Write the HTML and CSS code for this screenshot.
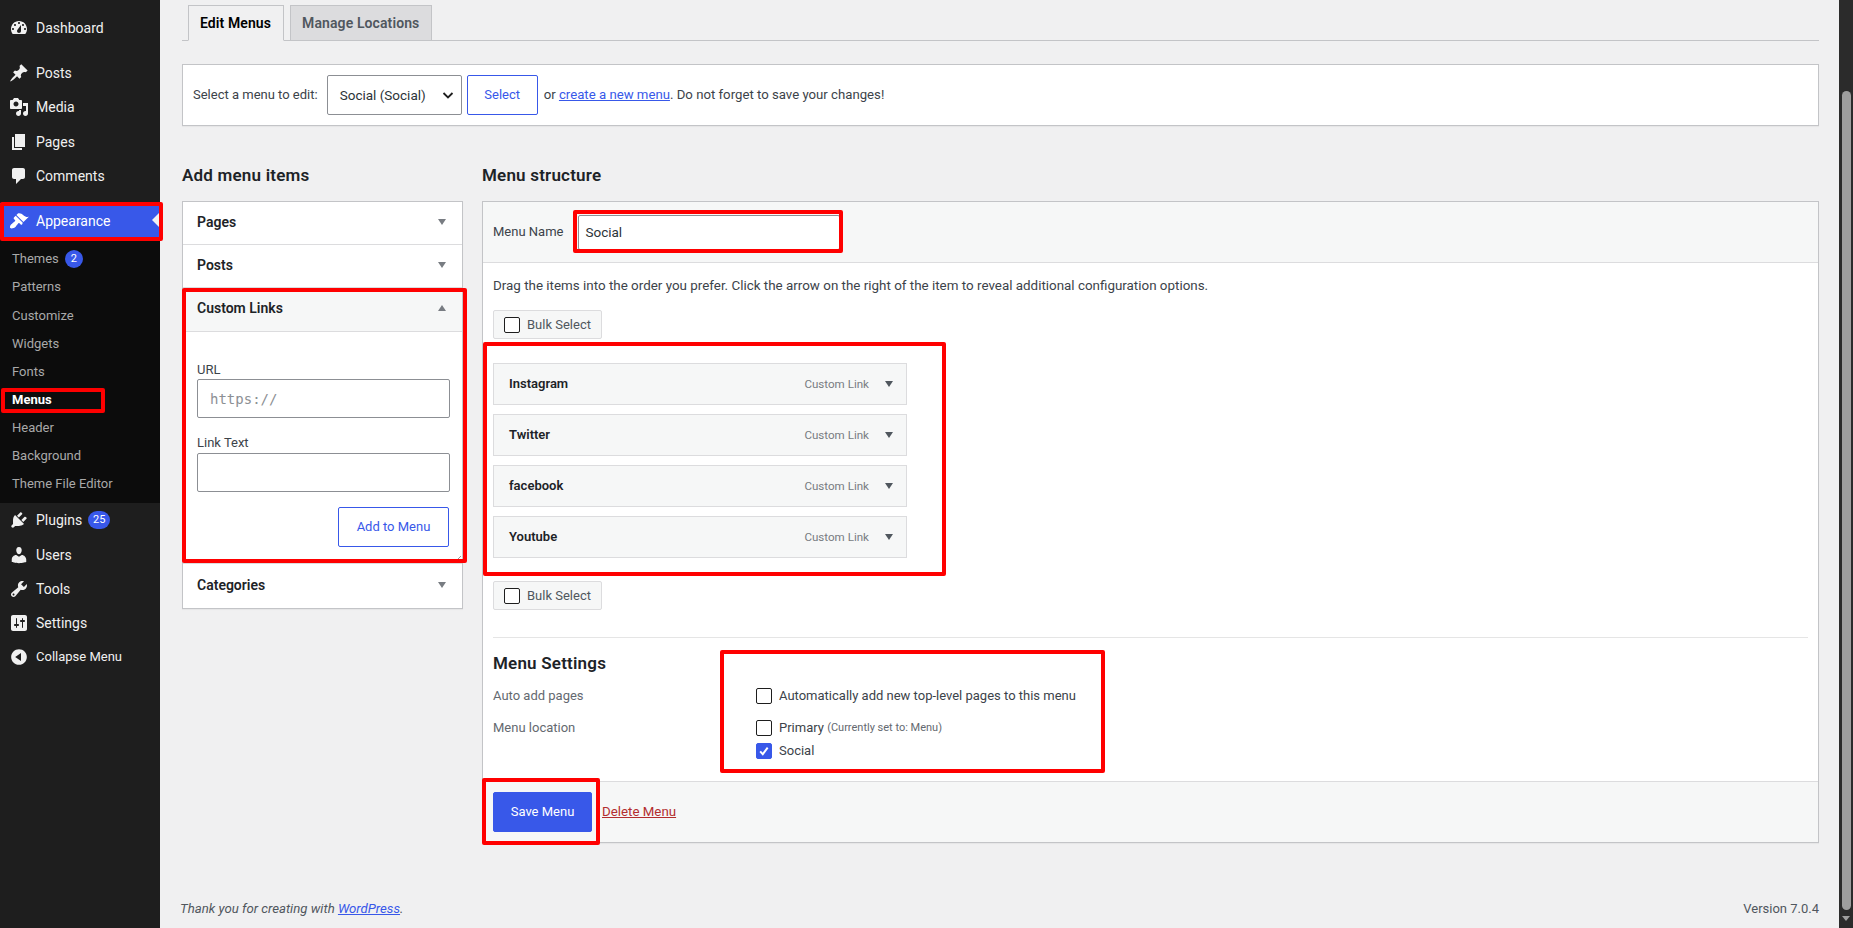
FILE: index.html
```html
<!DOCTYPE html>
<html lang="en">
<head>
  <meta charset="UTF-8">
  <meta name="viewport" content="width=device-width, initial-scale=1.0">
  <title>Menus</title>
  <link rel="stylesheet" href="styles.css">
</head>
<body>
  <div class="page">
    <aside class="sidebar">
      <ul class="menu">
        <li class="menu-item menu-gap"><svg viewBox="0 0 20 20"><path fill-rule="evenodd" d="M3.76 16h12.48c1.1-1.37 1.76-3.11 1.76-5 0-4.42-3.58-8-8-8s-8 3.58-8 8c0 1.89.66 3.63 1.76 5zM10 4c.55 0 1 .45 1 1s-.45 1-1 1-1-.45-1-1 .45-1 1-1zM6 6c.55 0 1 .45 1 1s-.45 1-1 1-1-.45-1-1 .45-1 1-1zm8 0c.55 0 1 .45 1 1s-.45 1-1 1-1-.45-1-1 .45-1 1-1zm-5.37 5.55L12 7v6c0 1.1-.9 2-2 2s-2-.9-2-2c0-.57.24-1.08.63-1.45zM4 10c.55 0 1 .45 1 1s-.45 1-1 1-1-.45-1-1 .45-1 1-1zm12 0c.55 0 1 .45 1 1s-.45 1-1 1-1-.45-1-1 .45-1 1-1z"/></svg>Dashboard</li>
        <li class="menu-item"><svg viewBox="0 0 20 20"><path d="M10.44 3.02l1.82-1.82 6.36 6.35-1.83 1.82c-1.05-.68-2.48-.57-3.41.36l-.75.75c-.92.93-1.04 2.35-.35 3.41l-1.83 1.82-2.41-2.41-2.8 2.79c-.42.42-3.38 2.71-3.8 2.29s1.86-3.39 2.28-3.81l2.79-2.79L4.1 9.36l1.83-1.82c1.05.69 2.48.57 3.4-.36l.75-.75c.93-.92 1.05-2.35.36-3.41z"/></svg>Posts</li>
        <li class="menu-item"><svg viewBox="0 0 20 20"><path fill-rule="evenodd" d="M13 11V4c0-.55-.45-1-1-1h-1.67L9 1H5L3.67 3H2c-.55 0-1 .45-1 1v7c0 .55.45 1 1 1h10c.55 0 1-.45 1-1zM7 4.5c1.38 0 2.5 1.12 2.5 2.5S8.38 9.5 7 9.5 4.5 8.38 4.5 7 5.62 4.5 7 4.5zM14 6h5v10.5c0 1.38-1.12 2.5-2.5 2.5S14 17.88 14 16.5s1.12-2.5 2.5-2.5c.17 0 .34.02.5.05V9h-3V6zm-4 8.05V13h2v3.5c0 1.38-1.12 2.5-2.5 2.5S7 17.88 7 16.5 8.12 14 9.5 14c.17 0 .34.02.5.05z"/></svg>Media</li>
        <li class="menu-item"><svg viewBox="0 0 20 20"><path d="M6 15V2h10v13H6zm-1 1h8v2H3V5h2v11z"/></svg>Pages</li>
        <li class="menu-item menu-gap"><svg viewBox="0 0 20 20"><path d="M5 2h9c1.1 0 2 .9 2 2v7c0 1.1-.9 2-2 2h-2l-5 5v-5H5c-1.1 0-2-.9-2-2V4c0-1.1.9-2 2-2z"/></svg>Comments</li>
        <li class="menu-item current"><svg viewBox="0 0 20 20"><path d="M14.48 11.06L7.41 3.99l1.5-1.5c.5-.56 2.3-.47 3.51.32 1.21.8 1.43 1.28 2.91 2.1 1.18.64 2.45 1.26 4.45.85zm-.71.71L6.7 4.7 4.93 6.47c-.39.39-.39 1.02 0 1.41l1.06 1.06c.39.39.39 1.03 0 1.42-.6.6-1.43 1.11-2.21 1.69-.35.26-.7.53-1.01.84C1.43 13.23.4 16.22 1.4 17c1 .97 3.95-.02 5.29-1.37.31-.31.58-.66.84-1.01.58-.78 1.09-1.61 1.69-2.21.39-.39 1.02-.39 1.41 0l1.06 1.06c.39.39 1.02.39 1.41 0z"/></svg>Appearance<span class="current-arrow"></span></li>
        <li>
          <ul class="submenu">
            <li>Themes <span class="badge">2</span></li>
            <li>Patterns</li>
            <li>Customize</li>
            <li>Widgets</li>
            <li>Fonts</li>
            <li class="active">Menus</li>
            <li>Header</li>
            <li>Background</li>
            <li>Theme File Editor</li>
          </ul>
        </li>
        <li class="menu-item"><svg viewBox="0 0 20 20"><path d="M13.11 4.36L9.87 7.6 8 5.73l3.24-3.24c.35-.34 1.05-.2 1.56.32.52.51.66 1.21.31 1.55zm-8 1.77l.91-1.12 9.01 9.01-1.19.84c-.71.71-2.63 1.16-3.82 1.16H6.14L4.9 17.26c-.59.59-1.54.59-2.12 0-.59-.58-.59-1.53 0-2.12l1.24-1.24v-3.88c0-1.13.4-3.19 1.09-3.89zm7.26 3.97l3.24-3.24c.34-.35 1.04-.21 1.55.31.52.51.66 1.21.31 1.55l-3.24 3.25z"/></svg>Plugins <span class="badge badge-wide">25</span></li>
        <li class="menu-item"><svg viewBox="0 0 20 20"><path d="M10 9.25c-2.27 0-2.73-3.44-2.73-3.44C7 4.02 7.82 2 9.97 2c2.16 0 2.98 2.02 2.71 3.81 0 0-.41 3.44-2.68 3.44zm0 2.57L12.72 10c2.39 0 4.52 2.33 4.52 4.53v2.49s-3.65 1.13-7.24 1.13c-3.65 0-7.24-1.13-7.24-1.13v-2.49c0-2.25 1.94-4.48 4.47-4.48z"/></svg>Users</li>
        <li class="menu-item"><svg viewBox="0 0 20 20"><path fill-rule="evenodd" d="M16.68 9.77c-1.34 1.34-3.3 1.67-4.95.99l-5.41 6.52c-.99.99-2.59.99-3.58 0s-.99-2.59 0-3.57l6.52-5.42c-.68-1.65-.35-3.61.99-4.95 1.28-1.28 3.12-1.62 4.72-1.06l-2.89 2.89 2.82 2.82 2.86-2.87c.53 1.58.18 3.39-1.08 4.65zM3.81 16.21c.4.39 1.04.39 1.43 0 .4-.4.4-1.04 0-1.43-.39-.4-1.03-.4-1.43 0-.39.39-.39 1.03 0 1.43z"/></svg>Tools</li>
        <li class="menu-item"><svg viewBox="0 0 20 20"><path fill-rule="evenodd" d="M18 16V4c0-1.1-.9-2-2-2H4c-1.1 0-2 .9-2 2v12c0 1.1.9 2 2 2h12c1.1 0 2-.9 2-2zM8 11h1c.55 0 1 .45 1 1s-.45 1-1 1H8v1.5c0 .28-.22.5-.5.5s-.5-.22-.5-.5V13H6c-.55 0-1-.45-1-1s.45-1 1-1h1V5.5c0-.28.22-.5.5-.5s.5.22.5.5V11zm5-2h-1c-.55 0-1-.45-1-1s.45-1 1-1h1V5.5c0-.28.22-.5.5-.5s.5.22.5.5V7h1c.55 0 1 .45 1 1s-.45 1-1 1h-1v5.5c0 .28-.22.5-.5.5s-.5-.22-.5-.5V9z"/></svg>Settings</li>
        <li class="menu-item collapse"><svg viewBox="0 0 20 20"><path fill-rule="evenodd" d="M10 2.16c4.33 0 7.84 3.51 7.84 7.84s-3.51 7.84-7.84 7.84S2.16 14.33 2.16 10 5.71 2.16 10 2.16zm2 11.72V6.12L6.18 9.97z"/></svg>Collapse Menu</li>
      </ul>
    </aside>

    <main class="main">
      <div class="tabs">
        <a class="tab tab-active">Edit Menus</a>
        <a class="tab">Manage Locations</a>
      </div>

      <div class="manage">
        <span>Select a menu to edit:</span>
        <div class="select">Social (Social)
          <svg viewBox="0 0 16 16"><path d="M3.5 6l4.5 4.5L12.5 6" fill="none" stroke="#1e1e1e" stroke-width="1.8"/></svg>
        </div>
        <button class="btn">Select</button>
        <span class="manage-note">or <a href="#">create a new menu</a>. Do not forget to save your changes!</span>
      </div>

      <div class="columns">
        <section class="col-left">
          <h2>Add menu items</h2>
          <div class="accordion">
            <div class="acc-row">Pages<span class="arrow"></span></div>
            <div class="acc-row">Posts<span class="arrow"></span></div>
            <div class="acc-row acc-open">Custom Links<span class="arrow arrow-up"></span></div>
            <div class="acc-body">
              <label class="field-label field-url">URL</label>
              <input class="field mono" placeholder="https://">
              <label class="field-label field-text">Link Text</label>
              <input class="field">
              <div class="acc-actions"><button class="btn btn-add">Add to Menu</button></div>
              <svg class="resize-grip" viewBox="0 0 6 6"><path d="M0 6l6-6M3 6l3-3" stroke="#787c82" stroke-width="0.8"/></svg>
            </div>
            <div class="acc-row acc-last">Categories<span class="arrow"></span></div>
          </div>
        </section>

        <section class="col-right">
          <h2>Menu structure</h2>
          <div class="panel">
            <div class="panel-head">
              <label>Menu Name</label>
              <input class="name-input" value="Social">
            </div>
            <div class="panel-body">
              <p class="drag-note">Drag the items into the order you prefer. Click the arrow on the right of the item to reveal additional configuration options.</p>
              <div class="bulk"><span class="check"></span>Bulk Select</div>
              <ul class="items">
                <li class="item"><strong>Instagram</strong><span class="item-type">Custom Link</span><span class="arrow arrow-dark"></span></li>
                <li class="item"><strong>Twitter</strong><span class="item-type">Custom Link</span><span class="arrow arrow-dark"></span></li>
                <li class="item"><strong>facebook</strong><span class="item-type">Custom Link</span><span class="arrow arrow-dark"></span></li>
                <li class="item"><strong>Youtube</strong><span class="item-type">Custom Link</span><span class="arrow arrow-dark"></span></li>
              </ul>
              <div class="bulk"><span class="check"></span>Bulk Select</div>
              <div class="settings">
                <h3>Menu Settings</h3>
                <div class="set-row">
                  <span class="set-label">Auto add pages</span>
                  <span class="set-opt"><span class="check"></span>Automatically add new top-level pages to this menu</span>
                </div>
                <div class="set-row set-location">
                  <span class="set-label">Menu location</span>
                  <div class="set-opts">
                    <span class="set-opt"><span class="check"></span>Primary <small>(Currently set to: Menu)</small></span>
                    <span class="set-opt"><span class="check checked"><svg viewBox="0 0 16 16"><path d="M3.6 8.4l3 3.2 5.6-7.4" fill="none" stroke="#fff" stroke-width="2.2"/></svg></span>Social</span>
                  </div>
                </div>
              </div>
            </div>
            <div class="panel-foot">
              <button class="btn btn-save">Save Menu</button>
              <a class="delete" href="#">Delete Menu</a>
            </div>
          </div>
        </section>
      </div>

      <footer class="footer">
        <em>Thank you for creating with <a href="#">WordPress</a>.</em>
        <span>Version 7.0.4</span>
      </footer>
    </main>

    <div class="scrollbar">
      <div class="thumb"></div>
      <span class="scroll-down"></span>
    </div>

    <!-- red annotation boxes drawn over the screenshot -->
    <div class="mark mark-appearance"></div>
    <div class="mark mark-menus"></div>
    <div class="mark mark-custom"></div>
    <div class="mark mark-name"></div>
    <div class="mark mark-items"></div>
    <div class="mark mark-settings"></div>
    <div class="mark mark-save"></div>
  </div>
</body>
</html>
```

FILE: styles.css
```css
* {
  box-sizing: border-box;
}

body {
  margin: 0;
  background-color: #f0f0f1;
  color: #3c434a;
  font-family: Roboto, "Noto Sans", sans-serif;
  font-size: 13px;
  line-height: 18px;
}

ul {
  list-style-type: none;
  margin: 0;
  padding: 0;
}

a {
  color: #3858e9;
}

.page {
  position: relative;
  display: flex;
  width: 1853px;
  height: 928px;
  overflow: hidden;
}

/* sidebar */
.sidebar {
  flex: 0 0 160px;
  background-color: #1e1e1e;
  color: #f0f0f0;
  padding-top: 11px;
}

.menu-item {
  position: relative;
  display: flex;
  align-items: center;
  height: 34.3px;
  padding-left: 9px;
  font-size: 14px;
}

.menu-item svg {
  width: 20px;
  height: 20px;
  margin-right: 7px;
  fill: #f0f0f0;
}

.menu-gap {
  margin-bottom: 10.5px;
}

.current {
  background-color: #3858e9;
  color: #fff;
}

.current svg {
  fill: #fff;
}

.current-arrow {
  position: absolute;
  right: 0;
  top: 9px;
  border: 8px solid transparent;
  border-left: 0;
  border-right-color: #f0f0f1;
}

.submenu {
  background-color: #0c0c0c;
  padding: 7.5px 0 5px;
  color: #a9a9a9;
}

.submenu li {
  display: flex;
  align-items: center;
  height: 28.1px;
  padding-left: 12px;
}

.submenu .active {
  color: #fff;
  font-weight: 700;
}

.badge {
  display: inline-block;
  min-width: 18px;
  height: 18px;
  margin-left: 6px;
  border-radius: 9px;
  background-color: #3858e9;
  color: #fff;
  font-size: 11px;
  line-height: 18px;
  text-align: center;
}

.badge-wide {
  min-width: 22px;
}

.collapse {
  font-size: 13px;
}

/* main area */
.main {
  flex: 1;
  display: flex;
  flex-direction: column;
  padding: 5px 20px 0 22px;
  min-width: 0;
}

.tabs {
  display: flex;
  gap: 6px;
  height: 36px;
  padding-left: 6px;
  border-bottom: 1px solid #c3c4c7;
}

.tab {
  height: 36px;
  padding: 0 12px 0 11px;
  border: 1px solid #c3c4c7;
  background-color: #dcdcde;
  color: #50575e;
  font-size: 14px;
  font-weight: 600;
  letter-spacing: 0.1px;
  line-height: 35px;
}

.tab-active {
  background-color: #f0f0f1;
  border-bottom-color: #f0f0f1;
  color: #000;
}

.manage {
  display: flex;
  align-items: center;
  height: 62px;
  margin-top: 23px;
  padding-left: 10px;
  background-color: #fff;
  border: 1px solid #c3c4c7;
  box-shadow: 0 1px 1px rgba(0, 0, 0, 0.04);
}

.select {
  display: flex;
  align-items: center;
  justify-content: space-between;
  width: 135px;
  height: 40px;
  margin-left: 9px;
  padding: 0 5px 0 12px;
  background-color: #fff;
  border: 1px solid #8c8f94;
  border-radius: 2px;
  color: #2c3338;
  font-size: 13.5px;
}

.select svg {
  width: 16px;
  height: 16px;
}

.btn {
  height: 40px;
  padding: 0;
  background-color: #fff;
  border: 1px solid #3858e9;
  border-radius: 2px;
  color: #3858e9;
  font: inherit;
}

.manage .btn {
  width: 71px;
  margin-left: 5px;
}

.manage-note {
  margin-left: 6px;
  font-size: 13.2px;
}

.columns {
  display: flex;
  gap: 19px;
  margin-top: 40px;
}

.col-left {
  flex: 0 0 281px;
}

.col-right {
  flex: 1;
}

h2 {
  margin: 0 0 16px;
  color: #1d2327;
  font-size: 17px;
  font-weight: 600;
  letter-spacing: 0.2px;
  line-height: 19px;
}

/* add menu items */
.accordion {
  background-color: #fff;
  border: 1px solid #c3c4c7;
  box-shadow: 0 1px 1px rgba(0, 0, 0, 0.04);
}

.acc-row {
  display: flex;
  align-items: center;
  justify-content: space-between;
  height: 43px;
  padding: 0 16px 2px 14px;
  border-bottom: 1px solid #dcdcde;
  color: #1d2327;
  font-size: 14px;
  font-weight: 600;
}

.acc-open {
  height: 44px;
  padding-bottom: 3px;
  background-color: #f6f7f7;
}

.acc-last {
  height: 44px;
  padding-bottom: 2px;
  border-bottom: 0;
}

.arrow {
  width: 0;
  height: 0;
  border-left: 4.5px solid transparent;
  border-right: 4.5px solid transparent;
  border-top: 6px solid #787c82;
}

.arrow-up {
  border-top: 0;
  border-bottom: 6px solid #787c82;
}

.arrow-dark {
  margin-left: 16px;
  border-left-width: 4px;
  border-right-width: 4px;
  border-top: 6px solid #50575e;
}

.acc-body {
  position: relative;
  padding: 0 12px 16px 14px;
  border-bottom: 1px solid #dcdcde;
}

.resize-grip {
  position: absolute;
  right: 1px;
  bottom: 1px;
  width: 6px;
  height: 6px;
}

.field-label {
  display: block;
  height: 20px;
  line-height: 20px;
}

.field-url {
  margin-top: 27px;
  line-height: 22px;
}

.field-text {
  margin-top: 15px;
}

.field {
  display: block;
  width: 253px;
  height: 39px;
  padding: 0 12px;
  background-color: #fff;
  border: 1px solid #8c8f94;
  border-radius: 2px;
}

.mono {
  font-family: "DejaVu Sans Mono", monospace;
  font-size: 14px;
}

.mono::placeholder {
  color: #8c8f94;
}

.acc-actions {
  display: flex;
  justify-content: flex-end;
  margin-top: 15px;
}

.btn-add {
  width: 111px;
  margin-right: 1px;
}

/* menu structure */
.panel {
  background-color: #fff;
  border: 1px solid #c3c4c7;
  box-shadow: 0 1px 1px rgba(0, 0, 0, 0.04);
}

.panel-head {
  display: flex;
  align-items: center;
  height: 61px;
  padding-left: 10px;
  background-color: #f6f7f7;
  border-bottom: 1px solid #dcdcde;
}

.name-input {
  width: 262px;
  height: 35px;
  margin-left: 15px;
  padding: 0 6px;
  background-color: #fff;
  border: 1px solid #8c8f94;
  border-radius: 2px;
  color: #2c3338;
  font: inherit;
  font-size: 13.5px;
}

.panel-body {
  padding: 14px 10px 22px;
}

.drag-note {
  margin: 0;
  font-size: 13.4px;
}

.bulk {
  display: flex;
  align-items: center;
  width: 109px;
  height: 29px;
  padding-left: 10px;
  background-color: #f6f7f7;
  border: 1px solid #dcdcde;
  border-radius: 2px;
  color: #50575e;
}

.drag-note + .bulk {
  margin-top: 15px;
}

.check {
  display: inline-flex;
  flex: 0 0 16px;
  width: 16px;
  height: 16px;
  margin-right: 7px;
  background-color: #fff;
  border: 1px solid #1e1e1e;
  border-radius: 2px;
}

.checked {
  background-color: #3858e9;
  border-color: #3858e9;
}

.items {
  display: flex;
  flex-direction: column;
  gap: 9px;
  margin: 24px 0 23px;
}

.item {
  display: flex;
  align-items: center;
  width: 414px;
  height: 42px;
  padding: 0 13px 0 15px;
  background-color: #f6f7f7;
  border: 1px solid #dcdcde;
  color: #1d2327;
}

.item strong {
  flex: 1;
  font-weight: 600;
}

.item-type {
  color: #787c82;
  font-size: 11.6px;
}

.settings {
  margin-top: 27px;
  padding-top: 15px;
  border-top: 1px solid #e5e5e5;
}

h3 {
  margin: 0 0 15px;
  color: #1d2327;
  font-size: 17px;
  font-weight: 600;
  letter-spacing: 0.2px;
  line-height: 20px;
}

.set-row {
  display: flex;
  align-items: center;
}

.set-location {
  align-items: flex-start;
  margin-top: 16px;
}

.set-label {
  flex: 0 0 263px;
  color: #646970;
  line-height: 16px;
}

.set-opts {
  display: flex;
  flex-direction: column;
  gap: 7px;
}

.set-opt {
  display: flex;
  align-items: center;
  height: 16px;
  white-space: pre;
}

small {
  color: #646970;
  font-size: 11px;
}

.panel-foot {
  display: flex;
  align-items: center;
  gap: 10px;
  height: 61px;
  padding-left: 10px;
  background-color: #f6f7f7;
  border-top: 1px solid #dcdcde;
}

.btn-save {
  width: 99px;
  background-color: #3858e9;
  color: #fff;
}

.delete {
  color: #b32d2e;
  font-size: 13.3px;
}

.footer {
  display: flex;
  justify-content: space-between;
  margin-top: auto;
  padding: 0 0 10px;
  color: #50575e;
}

.footer em {
  margin-left: -2px;
  font-size: 13.2px;
}

/* fake scrollbar */
.scrollbar {
  position: relative;
  flex: 0 0 14px;
  background-color: #2b2b2b;
}

.thumb {
  position: absolute;
  left: 3px;
  top: 91px;
  width: 9px;
  height: 819px;
  background-color: #9e9e9e;
  border-radius: 5px;
}

.scroll-down {
  position: absolute;
  left: 3px;
  top: 916px;
  border: 4px solid transparent;
  border-bottom: 0;
  border-top: 5px solid #9e9e9e;
}

/* annotation boxes */
.mark {
  position: absolute;
  border: 4px solid #f00;
  border-radius: 2px;
}

.mark-appearance { left: 0; top: 202px; width: 163px; height: 39px; }
.mark-menus { left: 1px; top: 388px; width: 104px; height: 25px; }
.mark-custom { left: 182px; top: 288px; width: 285px; height: 275px; }
.mark-name { left: 573px; top: 210px; width: 270px; height: 43px; }
.mark-items { left: 483px; top: 342px; width: 463px; height: 234px; }
.mark-settings { left: 720px; top: 650px; width: 385px; height: 123px; }
.mark-save { left: 482px; top: 778px; width: 118px; height: 67px; }
```
